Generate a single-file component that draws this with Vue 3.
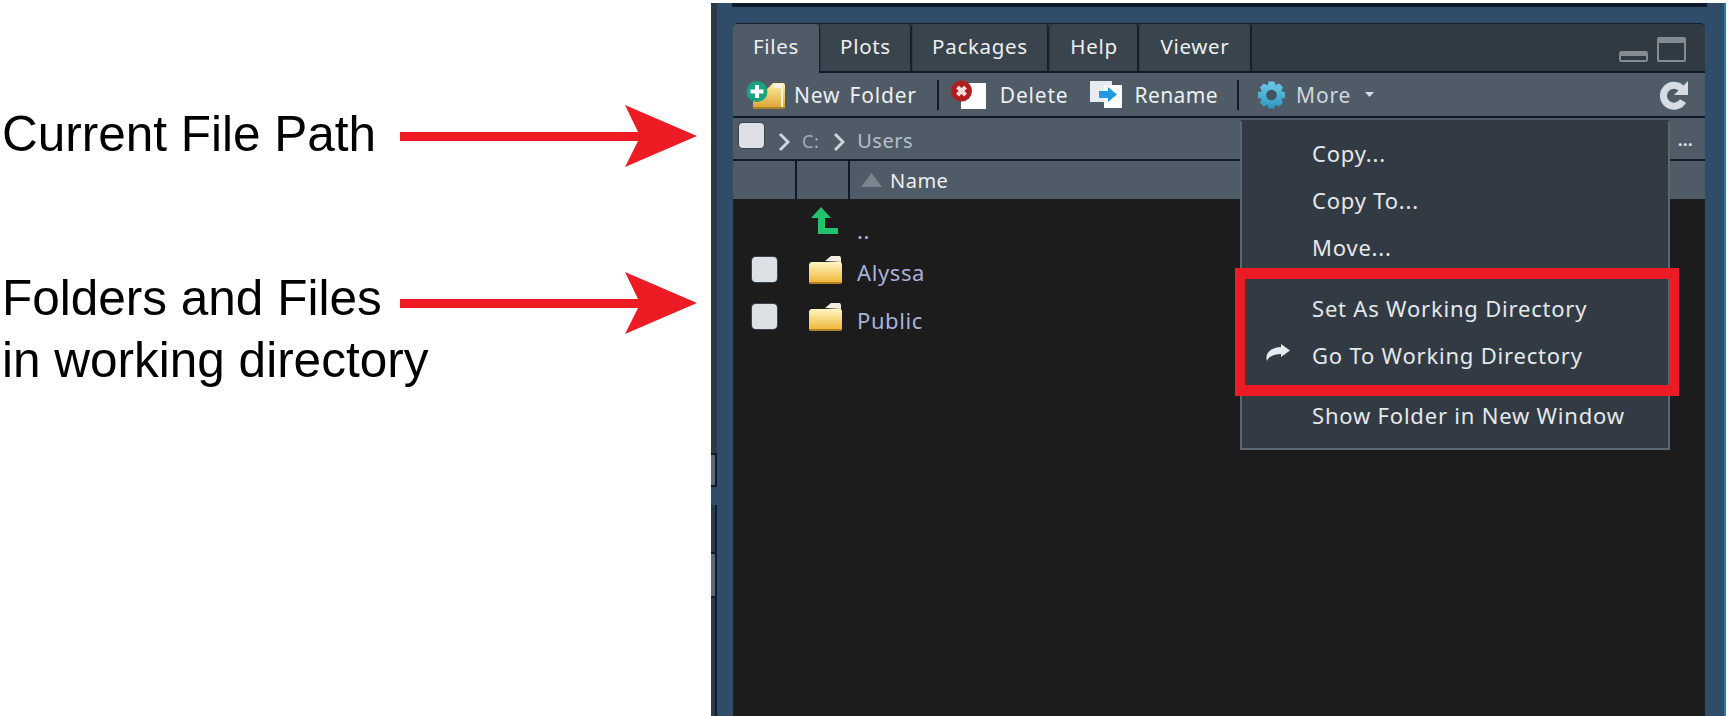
<script setup>
const tabs = ['Files', 'Plots', 'Packages', 'Help', 'Viewer']
const files = ['Alyssa', 'Public']
</script>

<template>
  <div class="page">
    <section class="notes">
      <div class="note first">
        <span class="note-text">Current File Path</span>
        <svg class="arrow" viewBox="0 0 297 62"><path d="M0 27H238L225 0 297 31 225 62 238 36H0Z" fill="#ed1c24" /></svg>
      </div>
      <div class="note second">
        <span class="note-text">Folders and Files</span>
        <svg class="arrow" viewBox="0 0 297 62"><path d="M0 27H238L225 0 297 31 225 62 238 36H0Z" fill="#ed1c24" /></svg>
      </div>
      <div class="note-text last">in working directory</div>
    </section>

    <section class="frame">
      <div class="rail">
        <i class="strip top"></i>
        <i class="grip one"></i>
        <i class="gap"></i>
        <i class="strip mid"></i>
        <i class="grip two"></i>
        <i class="strip end"></i>
      </div>
      <div class="pane">
        <div class="pane-top"></div>
        <div class="tabs">
          <div v-for="(t, i) in tabs" :key="t" class="tab" :class="[`tab-${i}`, { active: i === 0 }]">{{ t }}</div>
          <div class="win-btns">
            <svg width="29" height="11" viewBox="0 0 29 11"><rect x="1" y="1" width="27" height="9" rx="1.500" fill="none" stroke="#838b93" stroke-width="2" /><rect x="1" y="0" width="27" height="5" rx="1.500" fill="#838b93" /></svg>
            <svg width="29" height="25" viewBox="0 0 29 25"><rect x="1" y="1" width="27" height="23" rx="1" fill="none" stroke="#838b93" stroke-width="2" /><rect x="1" y="0" width="27" height="6" rx="1" fill="#838b93" /></svg>
          </div>
        </div>

        <div class="toolbar">
          <button class="tool new-folder">
            <svg width="39" height="28" viewBox="0 0 39 28">
              <defs>
                <linearGradient id="gold" x1="0" y1="0" x2="0" y2="1"><stop offset="0" stop-color="#fff0a8" /><stop offset="1" stop-color="#dca02c" /></linearGradient>
              </defs>
              <path d="M7 28h30a2 2 0 0 0 2-2V4a2 2 0 0 0-2-2H27l-6 6H7z" fill="url(#gold)" />
              <path d="M7 27h31" stroke="#a98227" stroke-width="2" />
              <path d="M28 3h9v23h-2V7h-7z" fill="#f7f2df" />
              <circle cx="11" cy="10.500" r="10.500" fill="#17a37e" />
              <path d="M9 4h4v4.500h4.500v4H13V17H9v-4.500H4.500v-4H9z" fill="#fff" />
            </svg>
            <span>New Folder</span>
          </button>
          <i class="sep"></i>
          <button class="tool delete">
            <svg width="35" height="29" viewBox="0 0 35 29">
              <rect x="10" y="3" width="25" height="26" fill="#fff" />
              <circle cx="10.500" cy="11" r="10.500" fill="#b11d1f" />
              <path d="M6.500 7l8 8M14.500 7l-8 8" stroke="#f3dcdc" stroke-width="4" />
            </svg>
            <span>Delete</span>
          </button>
          <button class="tool rename">
            <svg width="32" height="27" viewBox="0 0 32 27">
              <rect x="0" y="0" width="22" height="21" fill="#e8ecf0" />
              <rect x="14" y="4" width="18" height="23" fill="#fff" />
              <path d="M9 10h9V6l9 7.500L18 21v-4H9z" fill="#1d9ae0" />
            </svg>
            <span>Rename</span>
          </button>
          <i class="sep"></i>
          <button class="tool more">
            <svg width="29" height="30" viewBox="0 0 30 30">
              <defs>
                <linearGradient id="cog" x1="0" y1="0" x2="0" y2="1"><stop offset="0" stop-color="#6cc9e6" /><stop offset="1" stop-color="#2c97c4" /></linearGradient>
              </defs>
              <path d="M12 1h6l1 4 4-2 4 4-2 4 4 1v6l-4 1 2 4-4 4-4-2-1 4h-6l-1-4-4 2-4-4 2-4-4-1v-6l4-1-2-4 4-4 4 2z" fill="url(#cog)" />
              <circle cx="15" cy="15" r="5.500" fill="#3f5461" />
            </svg>
            <span>More</span>
            <svg class="caret" width="9" height="5" viewBox="0 0 9 5"><path d="M0 0h9L4.500 5z" fill="#d8dde2" /></svg>
          </button>
          <svg class="refresh" width="28" height="30" viewBox="0 0 28 30">
            <path d="M22 9a10.500 10.500 0 1 0 1 12" fill="none" stroke="#d5dce2" stroke-width="7" />
            <path d="M28 1v14H14z" fill="#d5dce2" />
          </svg>
        </div>

        <div class="pathbar">
          <span class="check"></span>
          <svg class="chev" width="12" height="20" viewBox="0 0 12 20"><path d="M2 2l8 8-8 8" fill="none" stroke="#cfd5da" stroke-width="3" /></svg>
          <span class="crumb drive">C:</span>
          <svg class="chev" width="12" height="20" viewBox="0 0 12 20"><path d="M2 2l8 8-8 8" fill="none" stroke="#cfd5da" stroke-width="3" /></svg>
          <span class="crumb">Users</span>
          <span class="dots">...</span>
        </div>

        <div class="header">
          <div class="cell c1"></div>
          <div class="cell c2"></div>
          <div class="cell c3">
            <svg width="21" height="14" viewBox="0 0 21 14"><path d="M10.500 0L21 14H0z" fill="#7b858e" /></svg>
            <span>Name</span>
          </div>
        </div>

        <div class="list">
          <div class="row up-row">
            <svg class="up" width="27" height="27" viewBox="0 0 27 27"><path d="M10 0l10 11h-6v10h13v6H7V11H0z" fill="#23c26d" /></svg>
            <span class="fname">..</span>
          </div>
          <div v-for="f in files" :key="f" class="row">
            <span class="check"></span>
            <svg class="folder" width="33" height="29" viewBox="0 0 33 29">
              <defs>
                <linearGradient id="fold" x1="0" y1="0" x2="0" y2="1"><stop offset="0" stop-color="#fff6c4" /><stop offset="1" stop-color="#eeb22f" /></linearGradient>
              </defs>
              <path d="M16 6l6-5h9l1 2v4z" fill="#f3efe0" />
              <path d="M0 9l2-2h30l1 2v18l-1 2H1l-1-2z" fill="url(#fold)" />
              <path d="M1 28h31" stroke="#9a7320" stroke-width="1.500" />
            </svg>
            <span class="fname">{{ f }}</span>
          </div>
        </div>

        <div class="menu">
          <div class="menu-item">Copy...</div>
          <div class="menu-item">Copy To...</div>
          <div class="menu-item">Move...</div>
          <div class="menu-item gap-a">Set As Working Directory</div>
          <div class="menu-item">
            <svg class="go" width="24" height="17" viewBox="0 0 24 17"><path d="M15 0l9 6.500L15 13V10C9 10 3 12 1 17-2 8 7 3 15 3z" fill="#e6ebf0" /></svg>
            Go To Working Directory
          </div>
          <div class="menu-item gap-b">Show Folder in New Window</div>
        </div>
        <div class="highlight"></div>
      </div>
    </section>
  </div>
</template>

<style scoped>
.page {
  display: flex;
  width: 1728px;
  height: 716px;
  overflow: hidden;
  background: #fff;
}

/* left hand notes */
.notes {
  width: 711px;
  flex: none;
  padding: 105px 0 0 2px;
  box-sizing: border-box;
  font-family: "Liberation Sans", Arial, sans-serif;
  color: #000;
}
.note {
  display: flex;
  align-items: center;
  height: 62px;
}
.note.second {
  margin-top: 105px;
}
.note-text {
  font-size: 49.500px;
  line-height: 60px;
  white-space: nowrap;
}
.note .note-text {
  width: 398px;
  margin-bottom: 10px;
}
.note.first .note-text {
  margin-bottom: 4px;
}
.note-text.last {
  margin-top: -4px;
}
.arrow {
  width: 297px;
  height: 62px;
  flex: none;
}

/* rstudio pane */
.frame {
  display: flex;
  flex: none;
  width: 1013px;
  height: 713px;
  margin-top: 3px;
  background: #2f4d68;
  border-right: 2px solid #2f79b8;
}
.rail {
  width: 6px;
  flex: none;
  display: flex;
  flex-direction: column;
}
.rail i {
  display: block;
  box-sizing: border-box;
}
.strip {
  background: #2d3a44;
}
.strip.top { height: 450px; }
.strip.mid { height: 47px; border-right: 2px solid #0e1c2e; }
.strip.end { flex: 1; border-right: 2px solid #0e1c2e; }
.gap { height: 18px; }
.grip {
  background: #5d6770;
  border-top: 2px solid #0e1c2e;
  border-bottom: 2px solid #0e1c2e;
  border-right: 2px solid #0e1c2e;
}
.grip.one { height: 34px; }
.grip.two { height: 46px; }

.pane {
  position: relative;
  width: 972px;
  margin-left: 16px;
  display: flex;
  flex-direction: column;
  font-family: "Noto Sans", "Open Sans", sans-serif;
  color: #eceff2;
}
.pane-top {
  height: 4px;
  margin: 0 -2px 0 -1px;
  background: #0e1c2a;
  flex: none;
}
.tabs {
  margin-top: 16px;
  height: 50px;
  flex: none;
  display: flex;
  align-items: stretch;
  background: #303a42;
  border-top: 1px solid #14202c;
  border-radius: 5px 5px 0 0;
  box-sizing: border-box;
  border-bottom: 2px solid #0e1c2a;
  position: relative;
}
.tab {
  display: flex;
  align-items: center;
  justify-content: center;
  padding-bottom: 3px;
  font-size: 20.500px;
  letter-spacing: 0.7px;
  background: #3a444c;
  border-right: 2px solid #14202c;
  border-radius: 4px 4px 0 0;
  box-sizing: border-box;
  margin-right: 1px;
}
.tab-0 { width: 87px; }
.tab-1 { width: 91px; }
.tab-2 { width: 136px; margin-right: 2px; }
.tab-3 { width: 88px; }
.tab-4 { width: 112px; }
.tab.active {
  background: #4f5b66;
  margin-bottom: -2px;
  padding-bottom: 5px;
  border-right: 1px solid #14202c;
}
.win-btns {
  position: absolute;
  right: 19px;
  bottom: 9px;
  display: flex;
  align-items: flex-end;
  gap: 9px;
}
.toolbar {
  height: 43px;
  flex: none;
  display: flex;
  align-items: center;
  background: #4f5b66;
  border-bottom: 2px solid #0e1c2a;
  padding-left: 13px;
  font-size: 21px;
  letter-spacing: 0.8px;
}
.tool {
  display: flex;
  align-items: center;
  padding: 0;
  border: 0;
  background: none;
  color: inherit;
  font: inherit;
  letter-spacing: inherit;
}
.new-folder { gap: 9px; margin-right: 20px; word-spacing: 3px; }
.delete { gap: 14px; margin-left: 12px; margin-right: 22px; }
.rename { gap: 12px; margin-right: 19px; letter-spacing: 0.4px; }
.more { gap: 10px; margin-left: 18px; color: #d0d6dc; }
.caret { margin-left: 4px; }
.sep {
  width: 2px;
  height: 30px;
  background: #0e1c2a;
}
.refresh {
  margin-left: auto;
  margin-right: 17px;
}
.pathbar {
  height: 41px;
  flex: none;
  display: flex;
  align-items: center;
  background: #4f5b66;
  border-bottom: 2px solid #0e1c2a;
  padding-left: 6px;
  color: #b5c0ca;
  font-size: 20px;
  letter-spacing: 0.5px;
}
.check {
  display: block;
  width: 25px;
  height: 25px;
  flex: none;
  border-radius: 4px;
  background: #dde1e6;
  box-shadow: 0 0 0 1px #3a4450;
}
.pathbar .check { margin-top: -6px; }
.pathbar .chev { margin-left: 14px; margin-right: 12px; margin-top: 6px; }
.pathbar .crumb.drive { font-size: 18px; color: #9fadb9; }
.pathbar .crumb { position: relative; top: 2px; }
.dots {
  margin-left: auto;
  margin-right: 12px;
  font-weight: 700;
  position: relative;
  top: 1px;
  font-size: 16px;
  color: #e0e4e8;
}
.header {
  height: 38px;
  flex: none;
  display: flex;
  background: #0e1c2a;
  font-size: 20px;
  gap: 2px;
}
.cell { background: #4f5b66; }
.c1 { width: 62px; }
.c2 { width: 51px; }
.c3 {
  flex: 1;
  display: flex;
  align-items: center;
  gap: 8px;
  padding-left: 11px;
  letter-spacing: 0.5px;
}
.list {
  flex: 1;
  background: #1c1c1c;
}
.row {
  height: 47.500px;
  display: flex;
  align-items: center;
  padding-left: 19px;
  font-size: 22px;
  letter-spacing: 0.6px;
  color: #a7b2d8;
}
.row .folder { margin-left: 32px; }
.row .fname { margin-left: 15px; position: relative; top: 3px; }
.up-row { height: 46.500px; padding-left: 78px; }
.up-row .up { margin-top: -3px; }
.up-row .fname { margin-left: 19px; top: 8px; }

.menu {
  position: absolute;
  left: 507px;
  top: 117px;
  width: 430px;
  height: 330px;
  box-sizing: border-box;
  background: #323b43;
  border: 2px solid #5b6873;
  border-top-color: #323b43;
  padding-top: 7.500px;
  font-size: 22px;
  letter-spacing: 0.8px;
  color: #e4e8ec;
}
.menu-item {
  position: relative;
  height: 47px;
  line-height: 47px;
  padding-left: 70px;
  white-space: nowrap;
}
.menu-item.gap-a { margin-top: 14.500px; }
.menu-item.gap-b { margin-top: 13px; }
.go {
  position: absolute;
  left: 24px;
  top: 12px;
}
.highlight {
  position: absolute;
  left: 502px;
  top: 265px;
  width: 444px;
  height: 128px;
  box-sizing: border-box;
  border: 11px solid #ed1c24;
  border-left-width: 10px;
  border-right-width: 10px;
}
</style>

<style>
html, body {
  margin: 0;
  background: #fff;
}
</style>
